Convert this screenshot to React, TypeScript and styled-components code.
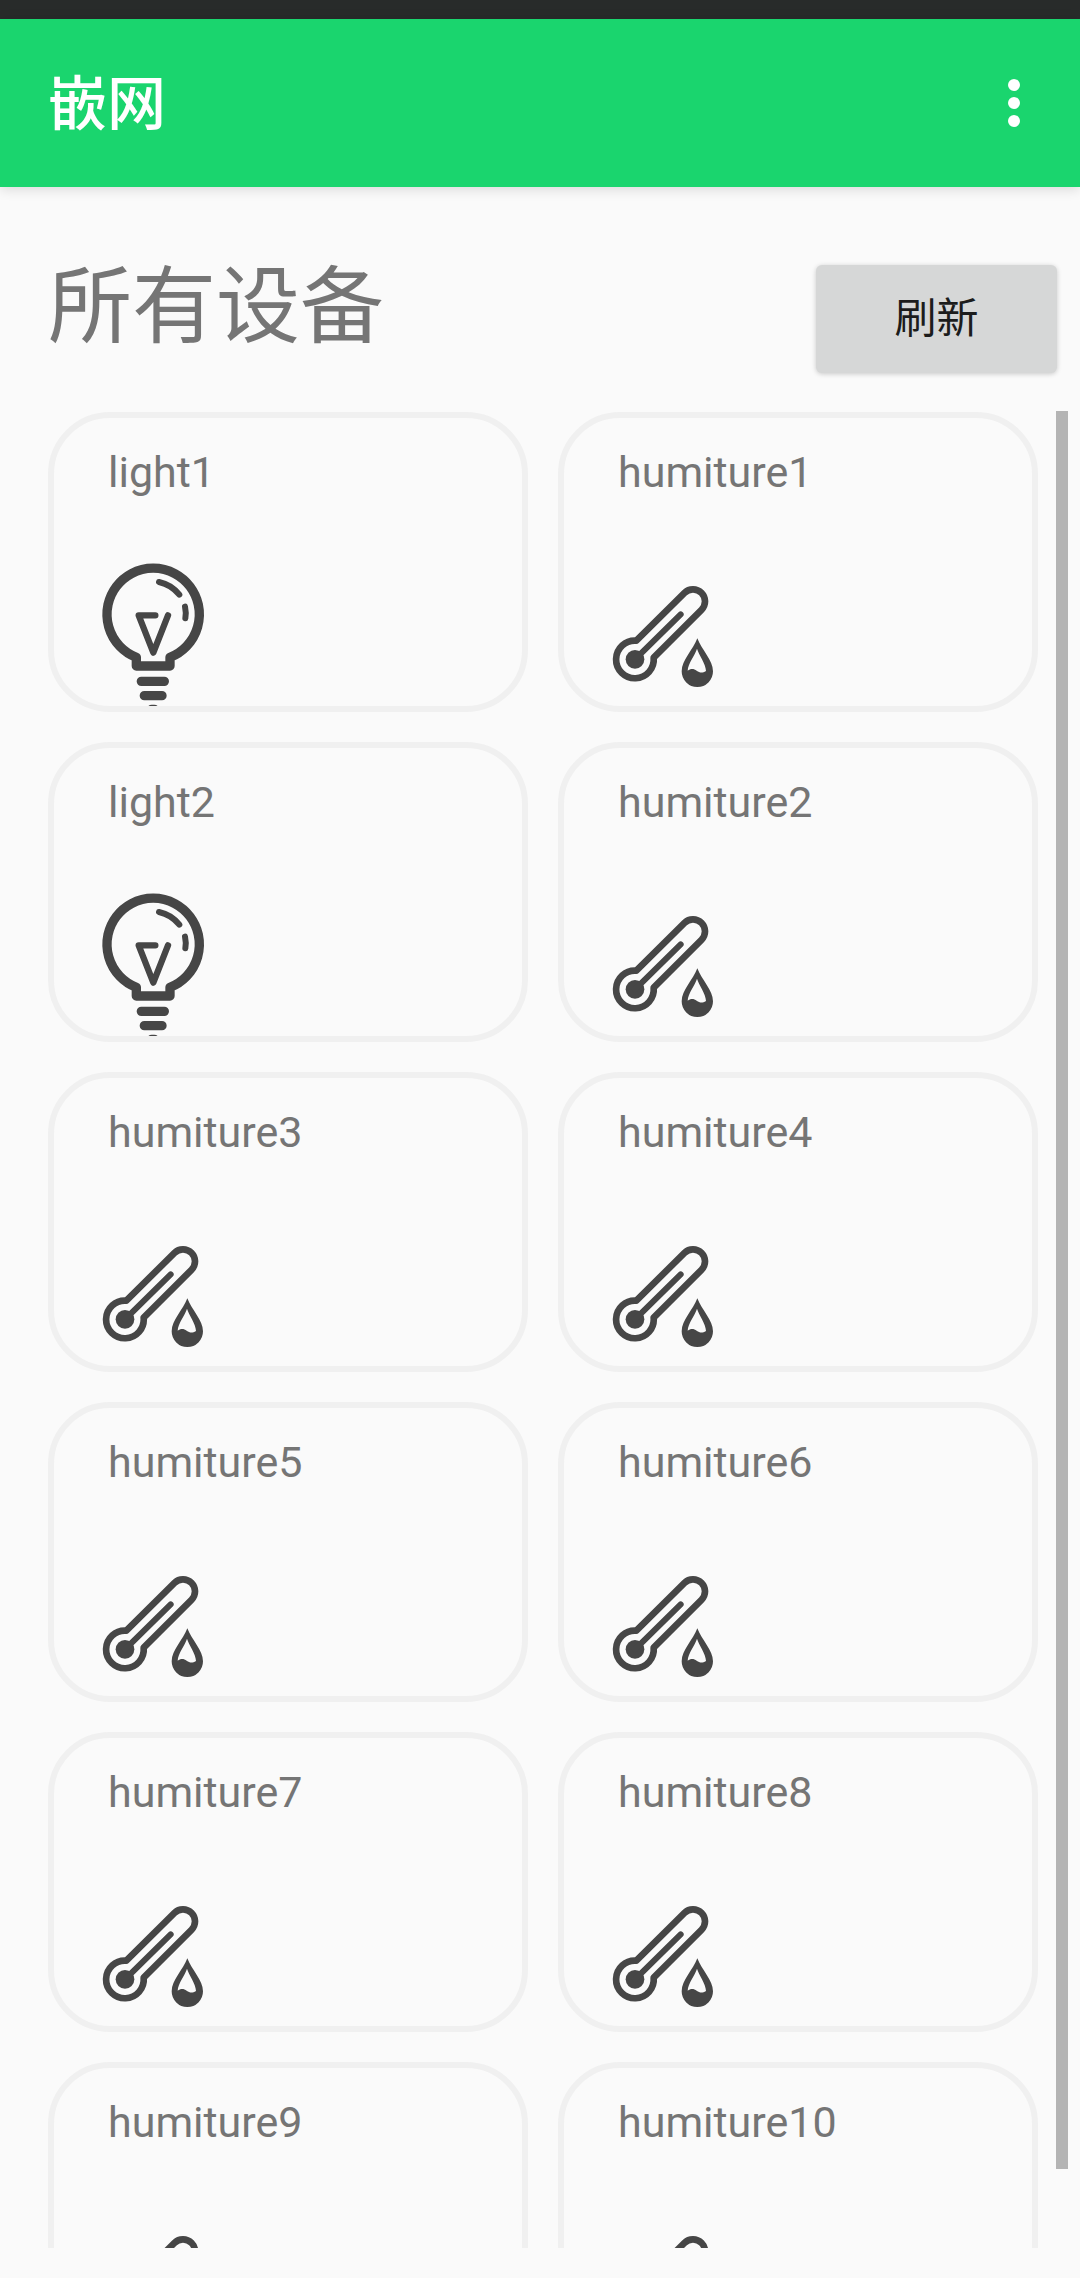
import React from 'react';
import styled, { createGlobalStyle } from 'styled-components';

const GlobalStyle = createGlobalStyle`
  * { box-sizing: border-box; }
  body {
    margin: 0;
    background: #fafafa;
    font-family: Roboto, 'Noto Sans CJK SC', sans-serif;
  }
`;

const Screen = styled.div`
  width: 1080px;
  height: 2278px;
  display: flex;
  flex-direction: column;
  overflow: hidden;
  background: #fafafa;
`;

const StatusBar = styled.div`
  flex: none;
  height: 19px;
  background: #282b2a;
`;

const AppBar = styled.header`
  flex: none;
  height: 168px;
  padding: 0 60px 0 48px;
  display: flex;
  align-items: center;
  justify-content: space-between;
  background: #1ad56e;
  box-shadow: 0 2px 12px rgba(0, 0, 0, 0.14);
`;

const AppTitle = styled.h1`
  margin: 0;
  padding-top: 3px;
  color: #fff;
  font-size: 59px;
  line-height: 80px;
  font-weight: 500;
`;

const MenuButton = styled.button`
  display: flex;
  flex-direction: column;
  gap: 6px;
  padding: 0;
  border: 0;
  background: none;
`;

const Dot = styled.span`
  width: 12px;
  height: 12px;
  border-radius: 50%;
  background: #fff;
`;

const Heading = styled.div`
  flex: none;
  height: 224px;
  padding: 78px 23px 0 48px;
  display: flex;
  align-items: flex-start;
  justify-content: space-between;
`;

const HeadingText = styled.h2`
  margin: -13px 0 0;
  color: #757575;
  font-size: 84px;
  line-height: 112px;
  font-weight: 400;
`;

const RefreshButton = styled.button`
  width: 241px;
  height: 108px;
  padding: 0;
  border: 0;
  border-radius: 6px;
  background: #d6d7d7;
  box-shadow: 0 1px 5px rgba(0, 0, 0, 0.2);
  color: #1c1c1c;
  font: 400 42px/60px Roboto, 'Noto Sans CJK SC', sans-serif;
`;

const List = styled.main`
  flex: none;
  height: 1837px;
  display: flex;
  justify-content: space-between;
  padding: 0 12px 0 48px;
  overflow: hidden;
`;

const Grid = styled.div`
  display: grid;
  grid-template-columns: 480px 480px;
  grid-auto-rows: 300px;
  gap: 30px;
  padding-top: 1px;
`;

const ScrollThumb = styled.div`
  width: 12px;
  height: 1758px;
  background: #b4b4b4;
`;

const Card = styled.article`
  display: flex;
  flex-direction: column;
  padding: 24px 36px 0;
  border: 6px solid #f0f0f0;
  border-radius: 62px;
  overflow: hidden;
`;

const DeviceName = styled.span`
  flex: none;
  height: 108px;
  padding-left: 18px;
  color: #757575;
  font-size: 43px;
  line-height: 60px;
`;

const DeviceIcon = styled.svg`
  flex: none;
  width: 130px;
  height: 156px;
  color: #464646;
  fill: none;
  stroke: currentColor;
  stroke-linecap: round;
  stroke-linejoin: round;
`;

const BulbIcon = () => (
  <DeviceIcon viewBox="0 0 390 468">
    <path strokeWidth="28" d="M139 348V322A138.500 138.500 0 1 1 240 322V348Z" />
    <path strokeWidth="18" d="M207 96Q244 104 268 134M285 170Q289 188 286 205" />
    <path strokeWidth="19" d="M196 196H146L190 308L234 196" />
    <path strokeWidth="28" d="M154 394H223M163 437H216M185 478H193" />
  </DeviceIcon>
);

const HumitureIcon = () => (
  <DeviceIcon viewBox="0 0 390 468">
    <g transform="translate(0 60)">
      <path
        strokeWidth="20"
        d="M109 212L253.500 68.500A36 36 0 0 1 304.500 119.500L161 263A56.500 56.500 0 1 1 109 212Z"
      />
      <circle cx="105" cy="268" r="28" fill="currentColor" stroke="none" />
      <path strokeWidth="18" d="M105 268L242 133" />
      <path
        fill="currentColor"
        fillRule="evenodd"
        stroke="none"
        d="M292 205C305 240 339 270 339 304A47 47 0 0 1 245 304C245 270 279 240 292 205ZM291 236C297 256 317 280 318 303C306 310 299 308 290 302C281 295 271 296 263 302C264 280 285 256 291 236Z"
      />
    </g>
  </DeviceIcon>
);

const devices = [
  'light1', 'humiture1', 'light2', 'humiture2', 'humiture3', 'humiture4',
  'humiture5', 'humiture6', 'humiture7', 'humiture8', 'humiture9', 'humiture10',
];

export default function App() {
  return (
    <>
      <GlobalStyle />
      <Screen>
        <StatusBar />
        <AppBar>
          <AppTitle>嵌网</AppTitle>
          <MenuButton>
            <Dot />
            <Dot />
            <Dot />
          </MenuButton>
        </AppBar>
        <Heading>
          <HeadingText>所有设备</HeadingText>
          <RefreshButton>刷新</RefreshButton>
        </Heading>
        <List>
          <Grid>
            {devices.map((name) => (
              <Card key={name}>
                <DeviceName>{name}</DeviceName>
                {name.startsWith('light') ? <BulbIcon /> : <HumitureIcon />}
              </Card>
            ))}
          </Grid>
          <ScrollThumb />
        </List>
      </Screen>
    </>
  );
}
